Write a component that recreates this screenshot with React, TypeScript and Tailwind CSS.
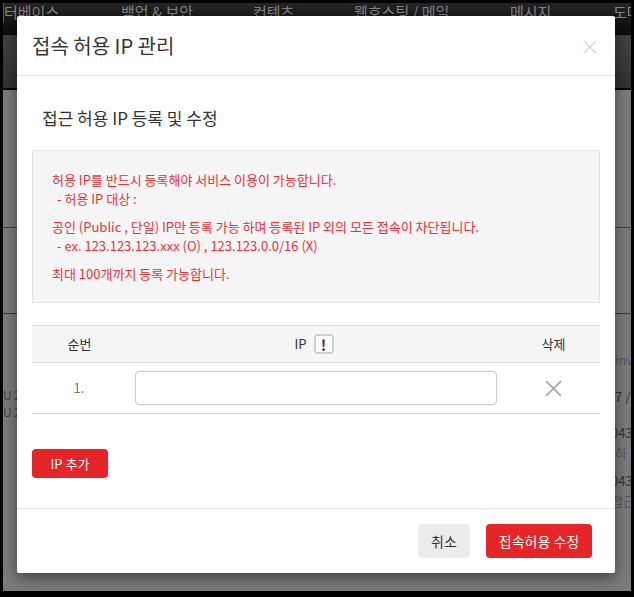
import React from "react";

const FONT = "font-['Noto_Sans_CJK_KR','Noto_Sans',sans-serif]";

const menus = [
  { label: "터베이스", width: "w-[117px]" },
  { label: "백업 & 보안", width: "w-[132px]" },
  { label: "컨텐츠", width: "w-[101px]" },
  { label: "웹호스팅 / 메일", width: "w-[156px]" },
  { label: "메시지", width: "w-[103px]" },
  { label: "도메인", width: "w-[60px]" },
];

function Backdrop() {
  return (
    <div className="flex h-[588px] flex-col overflow-hidden bg-[#7c7c7c]">
      <div className="h-[33px] overflow-hidden border-b border-[#3d3d3d] bg-linear-to-b from-[#262626] to-[#0c0c0c]">
        <div className="-mt-[1px] flex border-l border-[#6b5a48] text-[15px] leading-[20px] text-[#858585]">
          {menus.map((m) => (
            <span key={m.label} className={`${m.width} shrink-0 whitespace-nowrap`}>
              {m.label}
            </span>
          ))}
        </div>
      </div>
      <div className="h-[52px] bg-linear-to-b from-[#424242] to-[#333333]" />
      <div className="h-[2px] bg-black" />
      <div className="h-[138px] border-b border-[#3a3a3a]" />
      <div className="h-[86px] border-b border-[#3a3a3a]" />
      <div className="flex justify-between pt-[36px] text-[13px] leading-[20px] text-[#4a5a70]">
        <div className="pt-[36px] text-[12px] leading-[17px] text-[#3d4654]">
          <div>U 2</div>
          <div>U 2</div>
        </div>
        <div className="w-[16px] overflow-hidden whitespace-nowrap">
          <div>inv</div>
          <div className="mt-[17px] text-[#333]">7 /</div>
          <div className="mt-[16px] -ml-[4px] text-[#333]">043</div>
          <div>하</div>
          <div className="mt-[8px] -ml-[4px] text-[#333]">043</div>
          <div className="-ml-[4px]">접근</div>
        </div>
      </div>
    </div>
  );
}

function CloseIcon({ size, color, stroke }: { size: number; color: string; stroke: number }) {
  return (
    <svg width={size} height={size} viewBox="0 0 16 16" fill="none" stroke={color} strokeWidth={stroke}>
      <path d="M1 1 15 15M15 1 1 15" />
    </svg>
  );
}

export default function App() {
  return (
    <div className={`${FONT} relative h-[597px] w-[634px] overflow-hidden bg-black px-[3px] pt-[3px]`}>
      <Backdrop />

      <div className="absolute top-[16px] left-[17px] flex h-[557px] w-[598px] flex-col rounded-[2px] bg-white shadow-[0_5px_15px_rgba(0,0,0,0.5)]">
        <div className="flex h-[60px] shrink-0 items-center justify-between border-b border-[#e5e5e5] pr-[18px] pl-[15px]">
          <h1 className="pt-[1px] text-[20px] font-normal text-[#333]">접속 허용 IP 관리</h1>
          <button className="mt-[2px]">
            <CloseIcon size={14} color="#cfcfcf" stroke={1.4} />
          </button>
        </div>

        <div className="flex-1 px-[15px]">
          <h2 className="mt-[30px] pl-[10px] text-[17px] leading-[24px] font-normal text-[#333]">
            접근 허용 IP 등록 및 수정
          </h2>

          <div className="mt-[20px] h-[153px] w-[568px] border border-[#e3e3e3] bg-[#f5f5f5] pt-[19px] pl-[19px] text-[13px] leading-[19px] text-[#e5343a]">
            <p>허용 IP를 반드시 등록해야 서비스 이용이 가능합니다.</p>
            <p className="pl-[5px]">- 허용 IP 대상 :</p>
            <p className="mt-[9px]">공인 (Public , 단일) IP만 등록 가능 하며 등록된 IP 외의 모든 접속이 차단됩니다.</p>
            <p className="pl-[5px]">- ex. 123.123.123.xxx (O) , 123.123.0.0/16 (X)</p>
            <p className="mt-[9px]">최대 100개까지 등록 가능합니다.</p>
          </div>

          <div className="mt-[22px] w-[568px] text-[13px] text-[#333]">
            <div className="flex h-[38px] items-center border-y border-[#d4d4d4] bg-[#f5f5f5]">
              <div className="w-[95px] text-center">순번</div>
              <div className="flex w-[370px] items-center justify-center gap-[7px] pl-[4px]">
                IP
                <span className="flex h-[20px] w-[20px] items-center justify-center rounded-[4px] border-2 border-[#d0d0d0] bg-white text-[15px] leading-none font-bold">
                  !
                </span>
              </div>
              <div className="flex-1 pl-[10px] text-center">삭제</div>
            </div>
            <div className="flex h-[51px] items-center border-b border-[#d4d4d4]">
              <div className="w-[95px] pr-[1px] text-center text-[13px] text-[#777]">1.</div>
              <div className="w-[370px] pl-[8px]">
                <input className="block h-[34px] w-[362px] rounded-[4px] border border-[#c8c8c8] bg-white" />
              </div>
              <div className="flex flex-1 justify-center pt-[1px] pl-[10px]">
                <CloseIcon size={17} color="#a8a8a8" stroke={1.6} />
              </div>
            </div>
          </div>

          <button className="mt-[35px] block h-[29px] w-[76px] rounded-[4px] bg-[#e52528] text-[13px] text-white">
            IP 추가
          </button>
        </div>

        <div className="flex h-[65px] shrink-0 items-start justify-end gap-[16px] border-t border-[#e5e5e5] pt-[15px] pr-[23px]">
          <button className="h-[34px] w-[52px] rounded-[4px] bg-[#ececec] text-[14px] text-[#333]">취소</button>
          <button className="h-[34px] w-[106px] rounded-[4px] bg-[#e52528] text-[14px] text-white">접속허용 수정</button>
        </div>
      </div>
    </div>
  );
}
